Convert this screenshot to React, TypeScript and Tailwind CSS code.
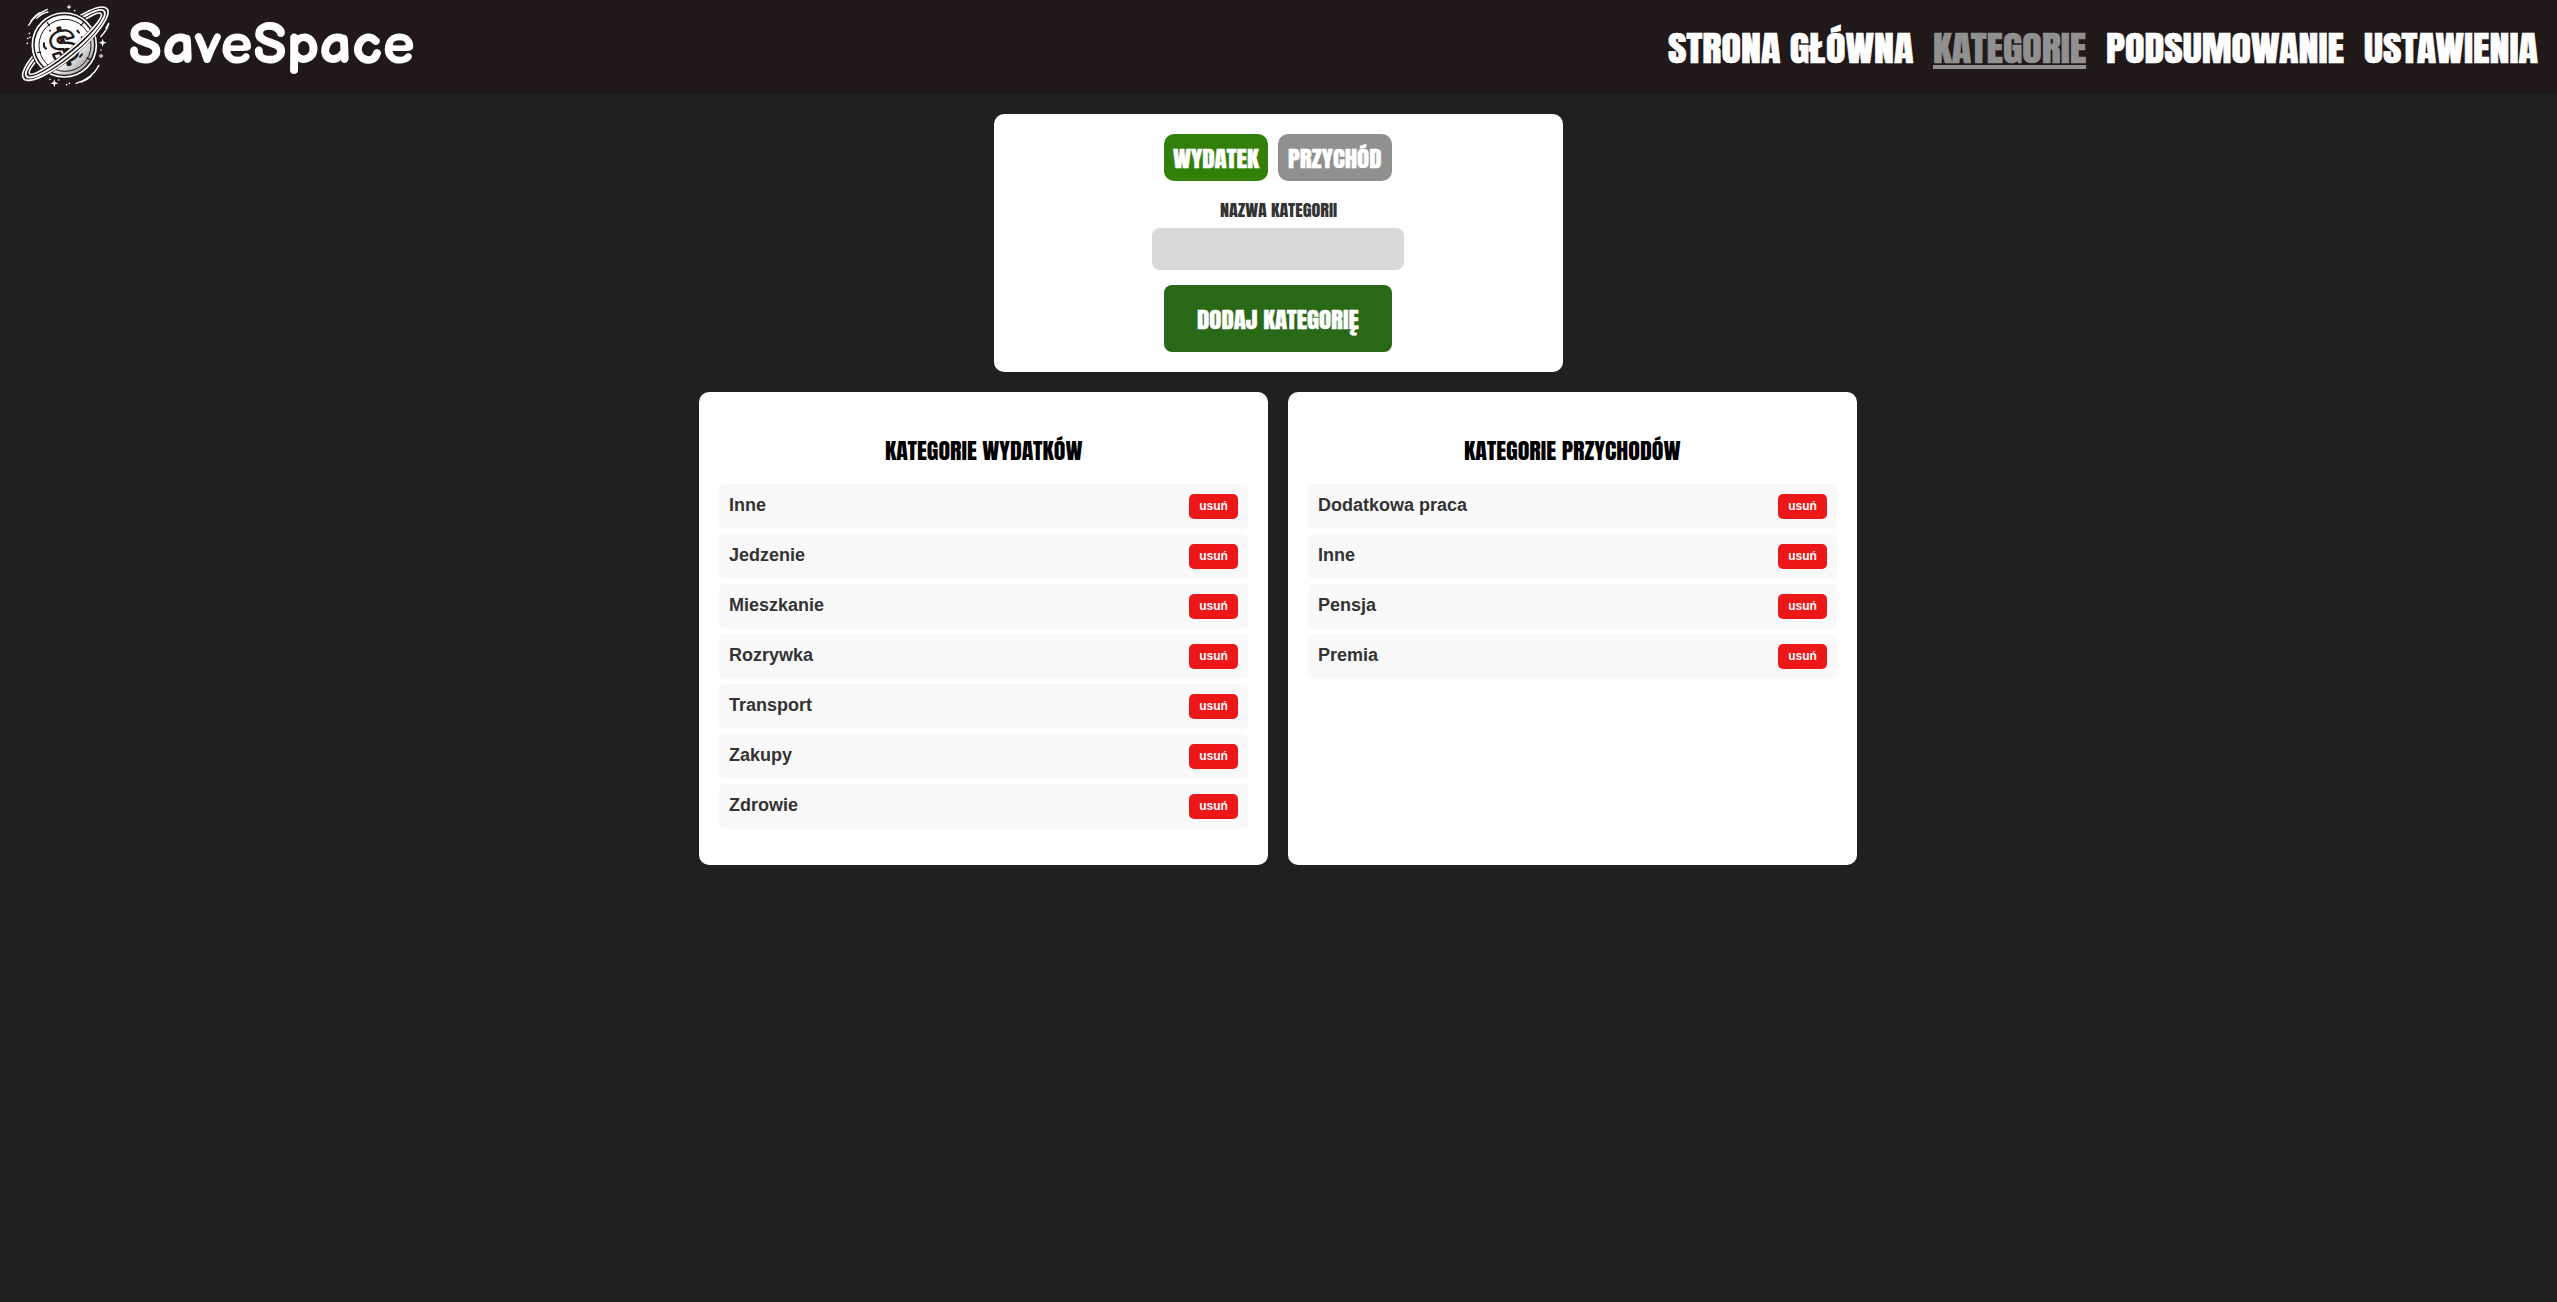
import { useLayoutEffect, useRef, useState } from "react";

const DISPLAY = "inline-block origin-left whitespace-nowrap font-['Anton',Impact,sans-serif]";

/* Stretches a line of display type horizontally to an exact width. */
function Fit({ text, width, className }: { text: string; width: number; className: string }) {
  const ref = useRef<HTMLSpanElement>(null);
  const [scale, setScale] = useState(1);
  useLayoutEffect(() => {
    if (ref.current) setScale(width / ref.current.offsetWidth);
  }, [text, width]);
  return (
    <span className="inline-block text-left" style={{ width }}>
      <span ref={ref} className={`${DISPLAY} ${className}`} style={{ transform: `scaleX(${scale})` }}>
        {text}
      </span>
    </span>
  );
}

function RingLines() {
  return (
    <>
      <ellipse rx="152" ry="33" stroke="#211819" strokeWidth="26" />
      <ellipse rx="163" ry="43" strokeWidth="5" />
      <ellipse rx="152" ry="34" strokeWidth="6" />
      <ellipse rx="140" ry="23" strokeWidth="5" />
    </>
  );
}

function Planet() {
  return (
    <svg viewBox="0 0 360 282" className="h-[94px] w-[120px] shrink-0" fill="none" stroke="#fff">
      <defs>
        <clipPath id="front">
          <rect x="-200" y="0" width="400" height="90" />
        </clipPath>
        <linearGradient id="shade" x1="0" y1="0" x2="1" y2="1">
          <stop offset="0.6" stopColor="#fff" />
          <stop offset="1" stopColor="#777" />
        </linearGradient>
      </defs>
      <g transform="translate(196 131) rotate(-40)">
        <RingLines />
      </g>
      <circle cx="193" cy="135" r="102" fill="#211819" stroke="none" />
      <circle cx="193" cy="135" r="96" strokeWidth="5" />
      <circle cx="193" cy="135" r="89" fill="url(#shade)" stroke="none" />
      <circle cx="195" cy="136" r="78" stroke="#211819" strokeWidth="3" />
      <g stroke="#211819" strokeWidth="4" strokeLinecap="round">
        <path d="M142 68l6 9M250 68l-7 8M270 178l-9-4M113 158l9-2" />
        <path d="M150 92v.1M232 92l5 6M245 112v.1M132 130q-2 12 6 16M240 170l6-7" strokeWidth="6" />
      </g>
      <text
        x="0"
        y="0"
        transform="translate(191 138) rotate(-16)"
        textAnchor="middle"
        dominantBaseline="central"
        className="font-['Inter',sans-serif] text-[126px] font-extrabold"
        fill="#fff"
        stroke="#211819"
        strokeWidth="7"
        strokeLinejoin="round"
      >
        $
      </text>
      <g transform="translate(196 131) rotate(-40)" clipPath="url(#front)">
        <RingLines />
      </g>
      <g strokeWidth="4" strokeLinecap="round">
        <path d="M86 76Q104 44 142 28M92 64Q108 44 120 38M110 55Q124 40 144 36" />
        <path d="M228 250Q276 236 297 196M244 246Q262 240 274 228M302 110Q320 92 326 72M318 84l8-14" />
        <path d="M88 100v.1M83 115v.1M82 130v.1M90 112v.1M224 32v.1M303 150v.1M176 240v.1M200 254v.1M208 250v.1M150 238v.1" strokeWidth="5" />
        <circle cx="303" cy="168" r="4" strokeWidth="3" />
      </g>
      <g fill="#fff" stroke="none">
        <path d="M308 116l3 9 9 3-9 3-3 9-3-9-9-3 9-3z" />
        <path d="M163 238l3 9 9 3-9 3-3 9-3-9-9-3 9-3z" />
        <path d="M207 13l2 6 6 2-6 2-2 6-2-6-6-2 6-2z" />
      </g>
    </svg>
  );
}

const NAV = [
  { label: "STRONA GŁÓWNA", width: 245, active: false },
  { label: "KATEGORIE", width: 153, active: true },
  { label: "PODSUMOWANIE", width: 238, active: false },
  { label: "USTAWIENIA", width: 174, active: false },
];

const LISTS = [
  {
    title: "KATEGORIE WYDATKÓW",
    width: 198,
    items: ["Inne", "Jedzenie", "Mieszkanie", "Rozrywka", "Transport", "Zakupy", "Zdrowie"],
  },
  { title: "KATEGORIE PRZYCHODÓW", width: 217, items: ["Dodatkowa praca", "Inne", "Pensja", "Premia"] },
];

export default function App() {
  return (
    <div className="min-h-[1302px] bg-[#202020] font-['Liberation_Sans',Arial,sans-serif]">
      <header className="flex h-[94px] items-center justify-between bg-[#211819] pr-[19px]">
        <div className="flex items-center">
          <Planet />
          <span className="ml-[8px] -mt-[2px] font-['Balsamiq_Sans','Quicksand',sans-serif] text-[56.4px] leading-[94px] font-bold text-white">
            SaveSpace
          </span>
        </div>
        <nav className="flex gap-5 pt-[2px] text-[34.7px] leading-[52px]">
          {NAV.map((n) => (
            <a key={n.label} className={n.active ? "h-[52px] text-[#909090]" : "h-[52px] text-white"}>
              <Fit
                text={n.label}
                width={n.width}
                className={
                  n.active
                    ? "underline decoration-[4px] underline-offset-[2px] [-webkit-text-stroke:0.6px_#909090] [text-decoration-skip-ink:none]"
                    : "[-webkit-text-stroke:0.6px_#fff]"
                }
              />
            </a>
          ))}
        </nav>
      </header>

      <main className="flex flex-col items-center gap-5 pt-5">
        <section className="flex h-[258px] w-[569px] flex-col items-center rounded-[10px] bg-white pt-5 pr-px">
          <div className="flex gap-[10px] text-[21.7px] leading-[45px] text-white">
            <button className="h-[47px] w-[104px] rounded-[10px] bg-[#327f0a] pt-[2px]">
              <Fit text="WYDATEK" width={86} className="[-webkit-text-stroke:0.4px_#fff]" />
            </button>
            <button className="h-[47px] w-[114px] rounded-[10px] bg-[#909090] pt-[2px]">
              <Fit text="PRZYCHÓD" width={94} className="[-webkit-text-stroke:0.4px_#fff]" />
            </button>
          </div>
          <label className="mt-[16px] h-[27px] text-[15.8px] leading-[27px] text-[#333]">
            <Fit text="NAZWA KATEGORII" width={117} className="" />
          </label>
          <input className="mt-[4px] h-[42px] w-[252px] rounded-[8px] bg-[#d9d9d9] outline-none" />
          <button className="mt-[15px] h-[67px] w-[228px] rounded-[8px] bg-[#296816] pt-[2px] text-[21.7px] leading-[65px] text-white">
            <Fit text="DODAJ KATEGORIĘ" width={162} className="[-webkit-text-stroke:0.4px_#fff]" />
          </button>
        </section>

        <div className="flex gap-5 pr-px">
          {LISTS.map((l) => (
            <section key={l.title} className="h-[473px] w-[569px] rounded-[10px] bg-white px-5 pt-[41px]">
              <h2 className="h-[36px] text-center text-[21px] leading-[36px] text-black">
                <Fit text={l.title} width={l.width} className="" />
              </h2>
              <ul className="mt-[15px] flex flex-col gap-[5px]">
                {l.items.map((i) => (
                  <li key={i} className="flex h-[45px] items-center justify-between rounded-[5px] bg-[#f9f9f9] px-[10px]">
                    <span className="pb-[2px] text-[18px] font-bold text-[#333]">{i}</span>
                    <button className="h-[25px] w-[49px] rounded-[5px] bg-[#ec1718] text-[12px] leading-[25px] font-bold text-white">
                      usuń
                    </button>
                  </li>
                ))}
              </ul>
            </section>
          ))}
        </div>
      </main>
    </div>
  );
}
